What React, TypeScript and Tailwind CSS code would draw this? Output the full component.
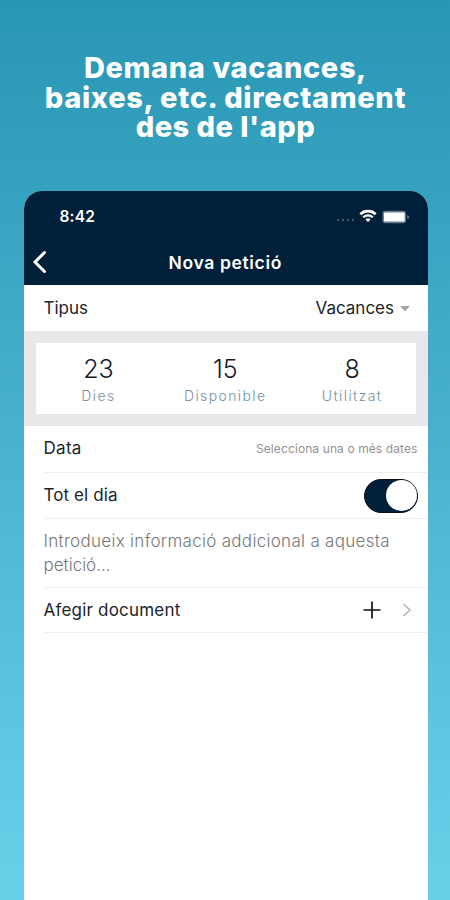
import type { ReactNode } from "react";

const STATS = [
  { value: "23", label: "Dies" },
  { value: "15", label: "Disponible" },
  { value: "8", label: "Utilitzat" },
];

function StatusBar() {
  return (
    <div className="flex h-[50px] items-center justify-between pt-px pr-[18px] pl-9">
      <span className="text-[15.5px] font-semibold tracking-[0.2px] text-white">8:42</span>
      <div className="flex items-center">
        <svg width="19" height="4" viewBox="0 0 19 4" fill="#3f566b" className="mt-[7px]">
          <circle cx="2" cy="2" r="1.2" />
          <circle cx="7" cy="2" r="1.2" />
          <circle cx="12" cy="2" r="1.2" />
          <circle cx="17" cy="2" r="1.2" />
        </svg>
        <svg width="18" height="14" viewBox="0 0 18 14" fill="none" stroke="#fff" className="mr-[5px] mb-px ml-1">
          <path d="M1.3 5.2a11.2 11.2 0 0 1 15.4 0" strokeWidth="2.6" />
          <path d="M4.2 8.2a7 7 0 0 1 9.6 0" strokeWidth="2.2" />
          <path d="M6.5 10.4a3.8 3.8 0 0 1 5 0L9 13z" fill="#fff" stroke="none" />
        </svg>
        <svg width="28" height="14" viewBox="0 0 28 14">
          <rect x="0.4" y="0.8" width="23.6" height="12.4" rx="3" fill="#6b7a89" />
          <rect x="2" y="2.4" width="20.6" height="9.2" rx="1.2" fill="#fff" />
          <path d="M25.2 5v4q2-.5 2-2t-2-2" fill="#6b7a89" />
        </svg>
      </div>
    </div>
  );
}

function Row({ children, className = "" }: { children: ReactNode; className?: string }) {
  return (
    <div className={`ml-[20px] flex shrink-0 items-center justify-between border-b border-[#eeeeee] ${className}`}>
      {children}
    </div>
  );
}

export default function App() {
  return (
    <div className="flex h-[900px] w-[450px] flex-col overflow-hidden bg-linear-to-b from-[#2796b4] to-[#68d1ea] font-['Inter','Liberation_Sans',sans-serif]">
      <h1 className="flex h-[191px] shrink-0 flex-col items-center pt-[53px] pl-px text-[29px] leading-[29.5px] font-extrabold text-white">
        <span className="tracking-[0.6px] whitespace-nowrap">Demana vacances,</span>
        <span className="tracking-[0.65px] whitespace-nowrap">baixes, etc. directament</span>
        <span className="tracking-[0.5px] whitespace-nowrap">des de l'app</span>
      </h1>

      <main className="ml-[23.5px] flex w-[404.5px] flex-1 flex-col overflow-hidden rounded-t-[18px] bg-white text-[#20242b]">
        <header className="h-[94px] shrink-0 bg-[#002039]">
          <StatusBar />
          <div className="grid h-[43px] grid-cols-[40px_1fr_40px] items-center">
            <svg width="16" height="24" viewBox="0 0 16 24" fill="none" stroke="#fff" strokeWidth="3" strokeLinecap="round" className="mb-1 ml-2">
              <path d="M12.5 3.5 3 13l9.5 9.5" />
            </svg>
            <h2 className="pt-px pr-px text-center text-[17.5px] font-semibold tracking-[0.65px] whitespace-nowrap text-white">Nova petició</h2>
          </div>
        </header>

        <div className="flex h-[46px] shrink-0 items-center justify-between pt-px pr-[18px] pl-[20px] text-[17px] font-[380]">
          <span>Tipus</span>
          <div className="flex items-center gap-[6px]">
            <span>Vacances</span>
            <svg width="10" height="6" viewBox="0 0 10 6" fill="#a5a5a5">
              <path d="M0 0h10L5 5.5z" />
            </svg>
          </div>
        </div>

        <section className="h-[95px] shrink-0 bg-[#e8e8e8] px-3 py-3">
          <div className="grid h-[71px] grid-cols-3 bg-white">
            {STATS.map((s) => (
              <div key={s.label} className="flex flex-col items-center pt-[11px] pr-px">
                <span className="text-[25px] leading-[30px] font-light text-[#151b2b]">{s.value}</span>
                <span className="text-[14px] leading-[24px] font-light tracking-[1.4px] text-[#75909f]">{s.label}</span>
              </div>
            ))}
          </div>
        </section>

        <Row className="h-[47px] pr-[10.5px]">
          <span className="text-[17px] font-[380] tracking-[0.3px]">Data</span>
          <span className="text-[12px] font-[380] tracking-[0.1px] text-[#929292]">Selecciona una o més dates</span>
        </Row>

        <Row className="h-[46px] pr-[10.5px]">
          <span className="text-[17px] font-[380] tracking-[0.1px]">Tot el dia</span>
          <span className="flex h-[34px] w-[54px] items-center justify-end rounded-full border-[1.5px] border-[#06101d] bg-[#002039]">
            <span className="h-[31px] w-[31px] rounded-full bg-white" />
          </span>
        </Row>

        <Row className="h-[69px] pr-[30px]">
          <p className="text-[17px] leading-[24px] font-light whitespace-nowrap text-[#777]">
            <span className="tracking-[0.3px]">Introdueix informació addicional a aquesta</span>
            <br />
            petició...
          </p>
        </Row>

        <Row className="h-[45px] pr-[16px]">
          <span className="pt-px text-[17px] font-[380] tracking-[0.2px]">Afegir document</span>
          <div className="flex items-center gap-[21px]">
            <svg width="18" height="18" viewBox="0 0 18 18" stroke="#111" strokeWidth="1.7">
              <path d="M9 .5v17M.5 9h17" />
            </svg>
            <svg width="10" height="14" viewBox="0 0 10 14" fill="none" stroke="#b4b4b4" strokeWidth="1.6">
              <path d="m1.5 1 6.5 6-6.5 6" />
            </svg>
          </div>
        </Row>
      </main>
    </div>
  );
}
